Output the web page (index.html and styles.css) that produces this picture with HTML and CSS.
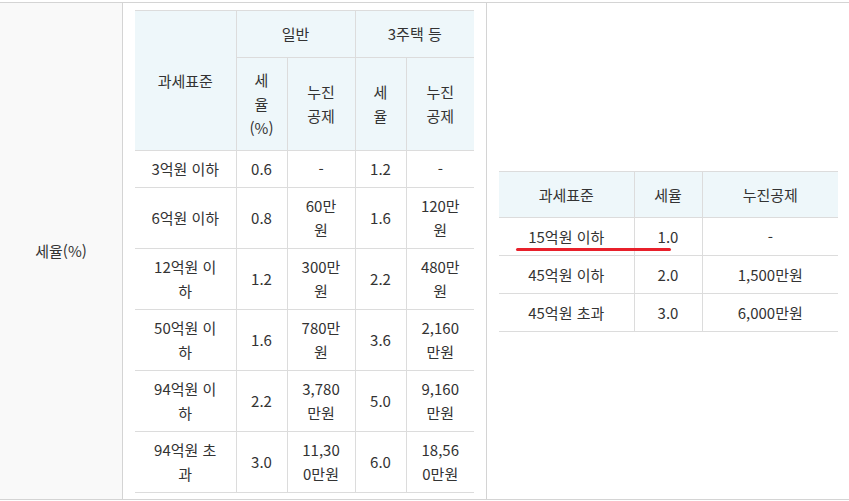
FILE: index.html
```html
<!DOCTYPE html>
<html lang="ko">
<head>
<meta charset="utf-8">
<title>세율</title>
<link rel="stylesheet" href="styles.css">
</head>
<body>
<div class="wrap">
<table class="outer">
  <colgroup><col class="c-label"><col class="c-mid"><col class="c-right"></colgroup>
  <tr>
    <th class="label">세율(%)</th>
    <td class="mid">
      <table class="rate rate-a">
        <colgroup><col class="a1"><col class="a2"><col class="a3"><col class="a2"><col class="a3"></colgroup>
        <thead>
          <tr class="h1">
            <th rowspan="2">과세표준</th>
            <th colspan="2">일반</th>
            <th colspan="2">3주택 등</th>
          </tr>
          <tr class="h2">
            <th>세<br>율<br>(%)</th>
            <th>누진<br>공제</th>
            <th>세<br>율</th>
            <th>누진<br>공제</th>
          </tr>
        </thead>
        <tbody>
          <tr><td>3억원 이하</td><td>0.6</td><td>-</td><td>1.2</td><td>-</td></tr>
          <tr><td>6억원 이하</td><td>0.8</td><td>60만<br>원</td><td>1.6</td><td>120만<br>원</td></tr>
          <tr><td>12억원 이<br>하</td><td>1.2</td><td>300만<br>원</td><td>2.2</td><td>480만<br>원</td></tr>
          <tr><td>50억원 이<br>하</td><td>1.6</td><td>780만<br>원</td><td>3.6</td><td>2,160<br>만원</td></tr>
          <tr><td>94억원 이<br>하</td><td>2.2</td><td>3,780<br>만원</td><td>5.0</td><td>9,160<br>만원</td></tr>
          <tr><td>94억원 초<br>과</td><td>3.0</td><td>11,30<br>0만원</td><td>6.0</td><td>18,56<br>0만원</td></tr>
        </tbody>
      </table>
    </td>
    <td class="right">
      <div class="box">
        <table class="rate rate-b">
          <colgroup><col class="b1"><col class="b2"><col class="b3"></colgroup>
          <thead>
            <tr><th>과세표준</th><th>세율</th><th>누진공제</th></tr>
          </thead>
          <tbody>
            <tr><td>15억원 이하</td><td>1.0</td><td>-</td></tr>
            <tr><td>45억원 이하</td><td>2.0</td><td>1,500만원</td></tr>
            <tr><td>45억원 초과</td><td>3.0</td><td>6,000만원</td></tr>
          </tbody>
        </table>
        <span class="mark"></span>
      </div>
    </td>
  </tr>
</table>
</div>
</body>
</html>
```

FILE: styles.css
```css
html, body {
  margin: 0;
  padding: 0;
  background: #fff;
}
body {
  font-family: "Malgun Gothic", "Noto Sans CJK KR", "Noto Sans", sans-serif;
  font-size: 15px;
  line-height: 24px;
  color: #333;
}
.wrap {
  padding-top: 2px;
  width: 849px;
}
.outer {
  width: 849px;
  table-layout: fixed;
  border-collapse: separate;
  border-spacing: 0;
  border-top: 1px solid #d4d4d4;
  border-bottom: 1px solid #d4d4d4;
}
.c-label { width: 123px; }
.c-mid { width: 364px; }
.c-right { width: 362px; }

.outer > tbody > tr > th,
.outer > tbody > tr > td {
  padding: 0;
  vertical-align: middle;
}
.label {
  font-weight: normal;
  background: #f9f9f9;
  border-right: 1px solid #d4d4d4;
  text-align: center;
}
.mid {
  border-right: 1px solid #d4d4d4;
  padding: 7px 12px 6px 12px !important;
}
.right {
  padding: 0 0 0 12px !important;
}
.box {
  position: relative;
  width: 339px;
}

.rate {
  width: 339px;
  table-layout: fixed;
  border-collapse: collapse;
  border-top: 1px solid #dcdcdc;
  border-bottom: 1px solid #dcdcdc;
}
.rate th,
.rate td {
  text-align: center;
  vertical-align: middle;
  font-weight: normal;
  border: 1px solid #dcdcdc;
  padding: 6px 0;
}
.rate tr > :first-child { border-left: 0; }
.rate tr > :last-child { border-right: 0; }
.rate thead th {
  background: #eef7fa;
  padding: 10px 0;
}
.rate-a .h1 th { padding: 11px 0; }
.rate-a .h1 th:first-child { border-left: 0; }
.rate-a .h2 th:first-child { border-left: 1px solid #dcdcdc; }
.rate-a .h2 th:last-child { border-right: 0; }

.a1 { width: 101px; }
.a2 { width: 51px; }
.a3 { width: 68px; }

.b1 { width: 135px; }
.b2 { width: 68px; }
.b3 { width: 136px; }
.rate-b thead th { padding: 11px 0 10px; }
.rate-b tbody td { padding: 7px 0 6px; }

.mark {
  position: absolute;
  left: 17px;
  top: 77px;
  width: 155px;
  height: 3px;
  border-radius: 2px;
  background: #e8202b;
}
```
